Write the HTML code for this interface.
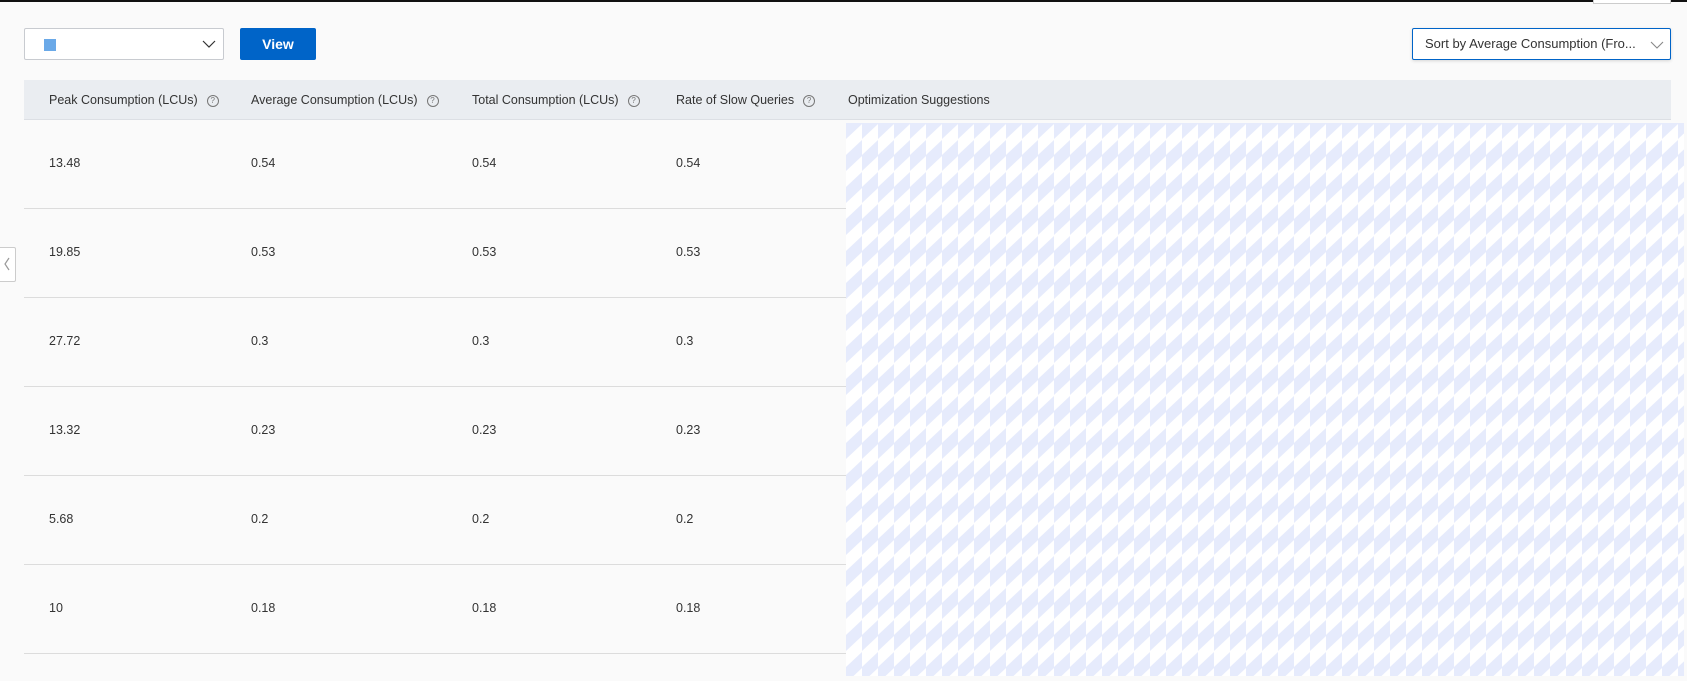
<!DOCTYPE html>
<html><head><meta charset="utf-8"><style>
body{margin:0;width:1687px;height:681px;background:#fafafa;font-family:"Liberation Sans",sans-serif;position:relative;overflow:hidden;color:#333}
.abs{position:absolute}
.topbar{left:0;top:0;width:1687px;height:2px;background:#111}
.sel{left:24px;top:28px;width:198px;height:30px;border:1px solid #c8cbd0;background:#fff;border-radius:2px}
.btn{left:240px;top:28px;width:76px;height:32px;background:#0064c8;color:#fff;font-weight:bold;font-size:14px;text-align:center;line-height:32px;border-radius:2px}
.sort{left:1412px;top:28px;width:245px;height:30px;border:1px solid #0064c8;background:#fff;border-radius:2px;box-shadow:0 1px 3px rgba(0,0,0,.15);font-size:13px;line-height:30px;padding-left:12px}
.hdr{left:24px;top:80px;width:1647px;height:39px;background:#eaedf1;border-bottom:1px solid #dcdfe4}
.h{top:93px;font-size:12.5px;color:#333}
.q{display:inline-block;width:10px;height:10px;border:1px solid #777;border-radius:50%;font-size:8px;line-height:10px;text-align:center;color:#777;margin-left:9px;vertical-align:1px}
.line{left:24px;width:822px;height:1px;background:#dcdcdc}
.c{font-size:12.5px;color:#333}
</style></head><body>
<div class="abs topbar"></div>
<div class="abs" style="left:1593px;top:0;width:76px;height:3px;border:1px solid #ccc;border-top:none;background:#fff"></div>
<div class="abs sel"><div class="abs" style="left:19px;top:10px;width:12px;height:12px;background:#6aa9e8"></div>
<svg class="abs" style="left:177px;top:10px" width="14" height="10"><path d="M1 2 L7 8 L13 2" fill="none" stroke="#333" stroke-width="1.2"/></svg></div>
<div class="abs btn">View</div>
<div class="abs sort">Sort by Average Consumption (Fro...
<svg class="abs" style="left:237px;top:11px" width="14" height="10"><path d="M1 2 L7 8 L13 2" fill="none" stroke="#888" stroke-width="1.1"/></svg></div>
<div class="abs hdr"></div>
<div class="abs h" style="left:49px">Peak Consumption (LCUs)<span class="q">?</span></div>
<div class="abs h" style="left:251px">Average Consumption (LCUs)<span class="q">?</span></div>
<div class="abs h" style="left:472px">Total Consumption (LCUs)<span class="q">?</span></div>
<div class="abs h" style="left:676px">Rate of Slow Queries<span class="q">?</span></div>
<div class="abs h" style="left:848px">Optimization Suggestions</div>
<svg class="abs" style="left:846px;top:123px" width="838" height="553"><defs><pattern id="p" width="16" height="32" patternUnits="userSpaceOnUse"><rect width="16" height="32" fill="#fff"/><polygon points="0,0 0,16 16,1 16,0" fill="#e6ebfc"/><polygon points="0,32 16,17 16,32" fill="#e6ebfc"/></pattern></defs><rect width="838" height="553" fill="url(#p)"/></svg>
<div class="abs line" style="top:208px"></div>
<div class="abs line" style="top:297px"></div>
<div class="abs line" style="top:386px"></div>
<div class="abs line" style="top:475px"></div>
<div class="abs line" style="top:564px"></div>
<div class="abs line" style="top:653px"></div>
<div class="abs c" style="left:49px;top:156px">13.48</div><div class="abs c" style="left:251px;top:156px">0.54</div><div class="abs c" style="left:472px;top:156px">0.54</div><div class="abs c" style="left:676px;top:156px">0.54</div>
<div class="abs c" style="left:49px;top:245px">19.85</div><div class="abs c" style="left:251px;top:245px">0.53</div><div class="abs c" style="left:472px;top:245px">0.53</div><div class="abs c" style="left:676px;top:245px">0.53</div>
<div class="abs c" style="left:49px;top:334px">27.72</div><div class="abs c" style="left:251px;top:334px">0.3</div><div class="abs c" style="left:472px;top:334px">0.3</div><div class="abs c" style="left:676px;top:334px">0.3</div>
<div class="abs c" style="left:49px;top:423px">13.32</div><div class="abs c" style="left:251px;top:423px">0.23</div><div class="abs c" style="left:472px;top:423px">0.23</div><div class="abs c" style="left:676px;top:423px">0.23</div>
<div class="abs c" style="left:49px;top:512px">5.68</div><div class="abs c" style="left:251px;top:512px">0.2</div><div class="abs c" style="left:472px;top:512px">0.2</div><div class="abs c" style="left:676px;top:512px">0.2</div>
<div class="abs c" style="left:49px;top:601px">10</div><div class="abs c" style="left:251px;top:601px">0.18</div><div class="abs c" style="left:472px;top:601px">0.18</div><div class="abs c" style="left:676px;top:601px">0.18</div>
<div class="abs" style="left:-1px;top:247px;width:15px;height:33px;background:#fff;border:1px solid #ccc;border-radius:0 2px 2px 0"></div>
<svg class="abs" style="left:3px;top:257px" width="8" height="14"><path d="M6 1 L2 7 L6 13" fill="none" stroke="#999" stroke-width="1.2"/></svg>
</body></html>
